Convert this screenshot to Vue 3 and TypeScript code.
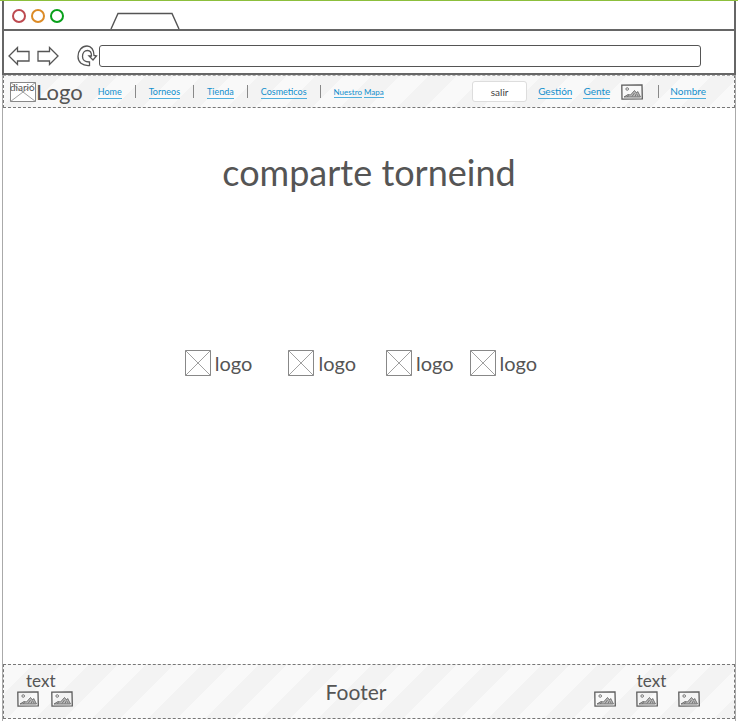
<script setup lang="ts">
import { defineComponent, h } from 'vue'

interface NavItem {
  label: string
  kind: string
}

const navItems: NavItem[] = [
  { label: 'Home', kind: 'home' },
  { label: 'Torneos', kind: 'torneos' },
  { label: 'Tienda', kind: 'tienda' },
  { label: 'Cosmeticos', kind: 'cosmeticos' },
]

const partners: string[] = ['first', 'second', 'third', 'fourth']

const PictureIcon = defineComponent({
  render() {
    return h(
      'svg',
      { width: 22, height: 16, viewBox: '0 0 22 16', fill: 'none', stroke: '#5c5c5c', 'aria-hidden': 'true' },
      [
        h('path', { d: 'M.8 1.2 21 .8l.3 14L1 15.2Z', 'stroke-width': 1.3 }),
        h('circle', { cx: 6.2, cy: 5, r: 1.3, 'stroke-width': 0.8 }),
        h('path', { d: 'm3 13 4-2.500 2.500.5 4-4.500 2 2.500 1.200-1.500L19.500 13Z', fill: '#bbb', 'stroke-width': 0.8 }),
        h('path', { d: 'm6 12.500 2-1m3 1 2.500-3.500m.5 3.500 1.500-3m1.500 3-.5-2', 'stroke-width': 0.7 }),
      ],
    )
  },
})

const CrossBox = defineComponent({
  props: { height: { type: Number, default: 26 } },
  render() {
    const b = this.height - 0.5
    return h(
      'svg',
      { width: 26, height: this.height, fill: 'none', stroke: '#888', 'aria-hidden': 'true' },
      [
        h('path', { d: `M.5.5h25v${b - 0.5}H.5Z`, fill: '#fff' }),
        h('path', { d: `M.5.5 25.5 ${b}M25.5.5.5 ${b}`, 'stroke-width': 0.8 }),
      ],
    )
  },
})
</script>

<template>
  <div class="window">
    <div class="tabs">
      <span class="dot red"></span>
      <span class="dot orange"></span>
      <span class="dot green"></span>
      <svg class="tab" width="70" height="17" viewBox="0 0 70 17" fill="none" stroke="#555" stroke-width="1.4" aria-hidden="true">
        <path d="M1 17 8 1.500h54l7 15.500" />
      </svg>
    </div>

    <div class="toolbar">
      <button type="button" class="tool" aria-label="Back">
        <svg width="22" height="20" viewBox="0 0 22 20" fill="none" stroke="#555" stroke-width="1.3">
          <path d="M1 10 9.500 1.500V5.500H21V15H9.500V18.500Z" />
        </svg>
      </button>
      <button type="button" class="tool forward" aria-label="Forward">
        <svg width="22" height="20" viewBox="0 0 22 20" fill="none" stroke="#555" stroke-width="1.3">
          <path d="M21 10 12.500 1.500V5.500H1V15H12.500V18.500Z" />
        </svg>
      </button>
      <button type="button" class="tool reload" aria-label="Reload">
        <svg width="21" height="22" viewBox="0 0 21 22" fill="none" stroke="#555" stroke-width="1.3">
          <path d="M12.500 20.500C5 21 1 17 1 11.500 1 5.500 5 1 10 1c4 0 7 3.500 7 9.500l2.500.5-3.500 4-4-4h2.500C14.500 7.500 13 5.500 10.500 5.500 7.500 5.500 5.500 8 5.500 11.500c0 3.500 2.500 5.500 7 5.500Z" />
        </svg>
      </button>
      <input class="address" type="text" aria-label="Address" />
    </div>

    <div class="page">
      <header class="header striped">
        <a class="brand" href="#">
          <span class="brand-box">
            <CrossBox :height="20" />
            <span class="brand-tag">diario</span>
          </span>
          <span class="brand-name">Logo</span>
        </a>
        <nav class="nav">
          <template v-for="item in navItems" :key="item.kind">
            <a class="link" href="#">{{ item.label }}</a>
            <span class="divider"></span>
          </template>
          <a class="small-links" href="#"><span>Nuestro</span> <span>Mapa</span></a>
        </nav>
        <div class="account">
          <button type="button" class="exit">salir</button>
          <a class="link" href="#">Gestión</a>
          <a class="link" href="#">Gente</a>
          <PictureIcon />
          <span class="divider"></span>
          <a class="link" href="#">Nombre</a>
        </div>
      </header>

      <main class="content">
        <h1>comparte torneind</h1>
        <ul class="partners">
          <li v-for="name in partners" :key="name" :class="name">
            <CrossBox />
            <span>logo</span>
          </li>
        </ul>
      </main>

      <footer class="footer striped">
        <section class="group">
          <p>text</p>
          <div class="icons"><PictureIcon /><PictureIcon /></div>
        </section>
        <p class="footer-title">Footer</p>
        <section class="group right">
          <p>text</p>
          <div class="icons"><PictureIcon /><PictureIcon /><PictureIcon /></div>
        </section>
      </footer>
    </div>
  </div>
</template>

<style>
body {
  margin: 0;
  background: #fff;
}
</style>

<style scoped>
* {
  box-sizing: border-box;
}

.window {
  display: flex;
  flex-direction: column;
  min-height: 100vh;
  padding: 0 2px;
  border-top: 1px solid #8cbf3c;
  color: #555;
  font-family: Lato, "Open Sans", sans-serif;
}

.tabs {
  display: flex;
  align-items: center;
  gap: 5px;
  height: 28px;
  padding: 2px 8px 0;
  border: solid #666;
  border-width: 0 2px;
}

.dot {
  width: 14px;
  height: 14px;
  border: 2px solid;
  border-radius: 50%;
}

.red {
  border-color: #bd4a50;
}

.orange {
  border-color: #dc8b26;
}

.green {
  border-color: #08a01a;
}

.tab {
  align-self: flex-end;
  margin-left: 41px;
}

.toolbar {
  display: flex;
  align-items: center;
  height: 46px;
  padding: 8px 33px 0 4px;
  border: 2px solid #666;
}

.tool {
  display: flex;
  padding: 0;
  border: 0;
  background: none;
}

.forward {
  margin-left: 7px;
}

.reload {
  margin: 0 1px 0 18px;
}

.address {
  flex: 1;
  min-width: 0;
  height: 22px;
  padding: 0 6px;
  border: 1px solid #555;
  border-radius: 3px;
  background: #fff;
  font: inherit;
}

.page {
  display: flex;
  flex: 1;
  flex-direction: column;
  padding-bottom: 2px;
  border: solid #aaa;
  border-width: 0 1px;
}

.striped {
  border: 1px dashed #777;
  background: repeating-linear-gradient(135deg, #f9f9f9 0 20px, #f3f3f3 20px 40px);
}

.header {
  display: flex;
  align-items: center;
  justify-content: space-between;
  height: 33px;
  padding: 0 28px 0 6px;
  border-top-color: #aaa;
}

.brand,
.nav,
.account {
  display: flex;
  align-items: center;
}

.brand {
  color: #555;
  text-decoration: none;
}

.brand-box {
  display: flex;
  position: relative;
}

.brand-tag {
  position: absolute;
  top: 0;
  left: 0;
  font-size: 10px;
  line-height: 10px;
}

.brand-name {
  font-size: 22px;
  line-height: 24px;
}

.nav {
  flex: 1;
  gap: 13px;
  padding-left: 15px;
}

.link {
  border-bottom: 1px solid #4fafdd;
  color: #118fcd;
  font-size: 10px;
  line-height: 13px;
  text-decoration: none;
}

.nav .link {
  font-size: 9px;
}

.small-links {
  color: #118fcd;
  font-size: 8px;
  line-height: 12px;
  text-decoration: none;
}

.small-links span {
  border-bottom: 1px solid #4fafdd;
}

.divider {
  width: 1px;
  height: 13px;
  background: #888;
}

.account {
  gap: 11px;
}

.account .divider {
  margin-left: 4px;
}

.exit {
  width: 55px;
  height: 21px;
  padding: 0;
  border: 1px solid #ddd;
  border-radius: 3px;
  background: #fff;
  color: #444;
  font: 10px/18px Lato, sans-serif;
}

.content {
  display: flex;
  flex: 1;
  flex-direction: column;
  align-items: center;
}

h1 {
  margin: 42px 0 0;
  font-size: 36px;
  font-weight: 400;
  line-height: 44px;
}

.partners {
  display: flex;
  gap: 36px;
  margin: 156px 16px 0 0;
  padding: 0;
  list-style: none;
}

.partners li {
  display: flex;
  align-items: center;
  gap: 4px;
  font-size: 20px;
  line-height: 26px;
}

.partners .third {
  margin-left: -6px;
}

.partners .fourth {
  margin-left: -20px;
}

.footer {
  display: grid;
  grid-template-columns: 1fr auto 1fr;
  align-items: center;
  height: 55px;
  padding: 0 34px 0 13px;
}

.footer p {
  margin: 0;
}

.group {
  display: flex;
  flex-direction: column;
  align-items: flex-start;
  padding-bottom: 5px;
}

.group p {
  padding-left: 9px;
  font-size: 17px;
  line-height: 20px;
}

.icons {
  display: flex;
  gap: 12px;
}

.right {
  justify-self: end;
  align-items: center;
}

.right .icons {
  gap: 20px;
}

.footer-title {
  padding-right: 5px;
  font-size: 21px;
  line-height: 24px;
}
</style>
